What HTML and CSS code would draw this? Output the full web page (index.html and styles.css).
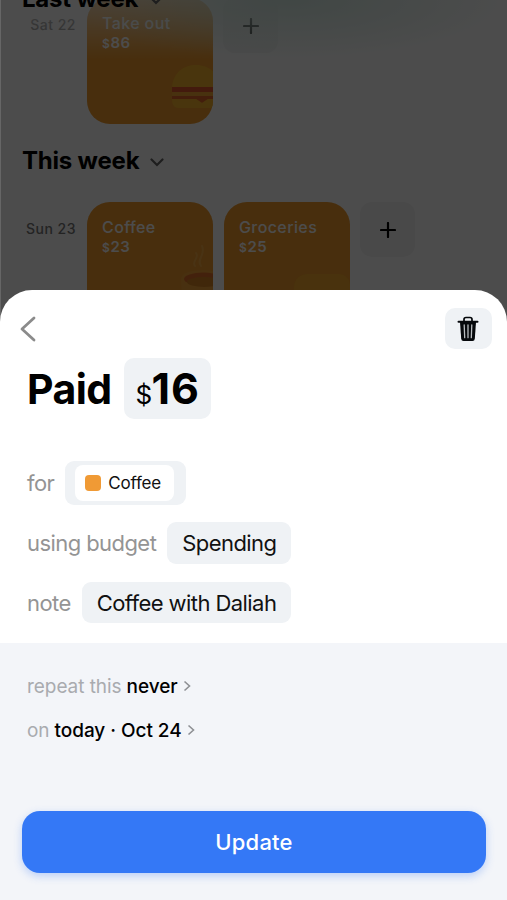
FILE: index.html
```html
<!DOCTYPE html>
<html lang="en">
<head>
    <meta charset="UTF-8">
    <meta name="viewport" content="width=device-width, initial-scale=1.0">
    <title>Edit expense</title>
    <link rel="stylesheet" href="styles.css">
</head>
<body>

<div class="page">
    <div class="week">
        <h2>Last week
            <svg class="down" viewBox="0 0 14 9"><path d="M1.5 1.5l5.5 5.5 5.5-5.5"/></svg>
        </h2>
        <div class="day">
            <div class="date faded">Sat 22</div>
            <div class="card">
                <div class="name">Take out</div>
                <div class="price"><small>$</small>86</div>
                <svg class="picture burger" viewBox="0 0 48 44">
                    <path d="M0 22C1 8 11 0 24 0s23 8 24 22z" fill="#f4b22c"/>
                    <path d="M0 22h48v5H0z" fill="#e2582e"/>
                    <path d="M0 27h48v4H0z" fill="#f1a334"/>
                    <path d="M0 31h48v3H36l-6 4-6-4H0z" fill="#e2642a"/>
                    <path d="M0 34h24l6 4 6-4h12c0 6-2 9-7 9H7c-5 0-7-3-7-9z" fill="#f4b22c"/>
                </svg>
            </div>
            <div class="add"><svg viewBox="0 0 16 16"><path d="M8 1v14M1 8h14"/></svg></div>
        </div>
    </div>

    <div class="week">
        <h2>This week
            <svg class="down" viewBox="0 0 14 9"><path d="M1.5 1.5l5.5 5.5 5.5-5.5"/></svg>
        </h2>
        <div class="day">
            <div class="date">Sun 23</div>
            <div class="card">
                <div class="name">Coffee</div>
                <div class="price"><small>$</small>23</div>
                <svg class="picture cup" viewBox="0 0 34 86">
                    <path d="M16 24c-4-5 5-8 1-13M22 24c-5-7 5-11 1-20" fill="none" stroke="#f4ab45" stroke-width="2" stroke-linecap="round"/>
                    <path d="M2 37c0-6 10-9 22-9 6 0 10 1 10 1v47H24C10 76 2 60 2 37z" fill="#f2a136"/>
                    <ellipse cx="24" cy="37" rx="19" ry="6.500" fill="#e2702a"/>
                    <ellipse cx="25" cy="40" rx="17" ry="5" fill="#d68424"/>
                </svg>
            </div>
            <div class="card">
                <div class="name">Groceries</div>
                <div class="price"><small>$</small>25</div>
                <svg class="picture bread" viewBox="0 0 56 52">
                    <path d="M0 14C0 5 6 0 14 0h30c8 0 12 5 12 12v40H0z" fill="#f3a92c"/>
                </svg>
            </div>
            <div class="add"><svg viewBox="0 0 16 16"><path d="M8 1v14M1 8h14"/></svg></div>
        </div>
    </div>
    <div class="glow"></div>
</div>

<div class="overlay"></div>

<div class="sheet">
    <div class="top">
        <svg class="back" viewBox="0 0 16 26"><path d="M14 2L2 13l12 11"/></svg>
        <div class="trash">
            <svg viewBox="0 0 22 26">
                <path d="M7 5V3.500Q7 1.500 9 1.500h4q2 0 2 2V5" fill="none" stroke="#05080b" stroke-width="1.700"/>
                <path d="M1.500 5.800h19" stroke="#05080b" stroke-width="2" stroke-linecap="round"/>
                <path d="M3 6h16l-1.200 16.800q-.2 2.200-2.300 2.200h-9q-2.100 0-2.300-2.200z" fill="#05080b"/>
                <path d="M7.200 9l.5 12.700M11 9v12.700M14.800 9l-.5 12.700" stroke="#b9bdc0" stroke-width="1.300" stroke-linecap="round"/>
            </svg>
        </div>
    </div>

    <h1>Paid <span class="amount"><small>$</small>16</span></h1>

    <div class="row row-for">
        <label>for</label>
        <div class="field category"><span class="tag"><i></i>Coffee</span></div>
    </div>
    <div class="row row-budget">
        <label>using budget</label>
        <div class="field">Spending</div>
    </div>
    <div class="row row-note">
        <label>note</label>
        <div class="field">Coffee with Daliah</div>
    </div>

    <div class="bottom">
        <div class="option">
            <span>repeat this</span> <b>never</b>
            <svg class="next" viewBox="0 0 8 12"><path d="M1.500 1.500L6.500 6l-5 4.500"/></svg>
        </div>
        <div class="option">
            <span>on</span> <b>today · Oct 24</b>
            <svg class="next" viewBox="0 0 8 12"><path d="M1.500 1.500L6.500 6l-5 4.500"/></svg>
        </div>
        <button class="update">Update</button>
    </div>
</div>

</body>
</html>
```
FILE: styles.css
```css
* {
    box-sizing: border-box;
}

body {
    margin: 0;
    height: 900px;
    position: relative;
    overflow: hidden;
    background-color: #fff;
    font-family: Inter, "Liberation Sans", sans-serif;
    color: #000;
}

svg {
    display: block;
    flex: none;
}

.page {
    height: 340px;
    overflow: hidden;
    position: relative;
    z-index: 0;
    padding-left: 2px;
}

.week {
    height: 162px;
    padding-left: 21px;
}

.week:first-child {
    margin-top: -16px;
}

h2 {
    position: relative;
    z-index: 2;
    display: flex;
    align-items: center;
    gap: 11px;
    margin: 0 0 0 -1px;
    height: 29px;
    font-size: 24px;
    line-height: 29px;
    letter-spacing: -0.2px;
}

.down {
    width: 14px;
    height: 9px;
    margin-top: 3px;
    fill: none;
    stroke: #666;
    stroke-width: 2.2;
    stroke-linecap: round;
}

.day {
    display: flex;
    padding-top: 27px;
}

.week:first-child .day {
    padding-top: 0;
    margin-top: -15px;
}

.date {
    width: 53px;
    margin: 18px 11px 0 0;
    font-size: 14px;
    line-height: 18px;
    font-weight: 500;
    letter-spacing: 0.5px;
    text-align: right;
    white-space: nowrap;
    color: #777;
}

.date.faded {
    color: #888;
}

.card {
    position: relative;
    width: 126px;
    height: 126px;
    margin-right: 11px;
    padding: 15px;
    border-radius: 23px;
    overflow: hidden;
    background-color: #f09a2c;
    color: #fff;
}

.name {
    font-size: 16px;
    line-height: 20px;
    font-weight: 500;
    letter-spacing: 0.4px;
}

.price {
    font-size: 15px;
    line-height: 19px;
    font-weight: 600;
    letter-spacing: 0.6px;
}

.price small {
    font-size: 12px;
}

.picture {
    position: absolute;
    right: 0;
}

.burger {
    width: 48px;
    height: 44px;
    right: -7px;
    bottom: 15px;
}

.cup {
    width: 34px;
    height: 86px;
    top: 40px;
}

.bread {
    width: 56px;
    height: 52px;
    bottom: 2px;
}

.add {
    display: flex;
    align-items: center;
    justify-content: center;
    width: 55px;
    height: 55px;
    margin-left: -1px;
    border-radius: 12px;
    background-color: #f5f5f5;
}

.add svg {
    width: 16px;
    height: 16px;
    stroke: #000;
    stroke-width: 2.2;
    stroke-linecap: round;
}

.glow {
    position: absolute;
    top: 0;
    left: 0;
    width: 100%;
    height: 60px;
    background:
        radial-gradient(ellipse 220px 60px at 290px 0, rgba(190, 225, 213, 0.6), rgba(190, 225, 213, 0)),
        linear-gradient(rgba(255, 255, 255, 0.65), rgba(255, 255, 255, 0));
}

.overlay {
    position: absolute;
    top: 0;
    left: 0;
    width: 100%;
    height: 100%;
    border-left: 1px solid rgba(255, 255, 255, 0.15);
    background-color: rgba(0, 0, 0, 0.7);
}

.sheet {
    position: absolute;
    top: 290px;
    left: 0;
    width: 100%;
    height: 610px;
    display: flex;
    flex-direction: column;
    border-radius: 32px 32px 0 0;
    overflow: hidden;
    background-color: #fff;
}

.top {
    display: flex;
    justify-content: space-between;
    align-items: center;
    height: 41px;
    margin: 18px 15px 0 20px;
}

.back {
    width: 16px;
    height: 26px;
    fill: none;
    stroke: #8b8b8b;
    stroke-width: 2.8;
    stroke-linecap: round;
    stroke-linejoin: round;
}

.trash {
    display: flex;
    align-items: center;
    justify-content: center;
    width: 47px;
    height: 41px;
    padding-right: 2px;
    border-radius: 10px;
    background-color: #eff2f5;
}

.trash svg {
    width: 22px;
    height: 26px;
}

h1 {
    display: flex;
    align-items: center;
    gap: 13px;
    height: 61px;
    margin: 9px 0 0 27px;
    font-size: 41px;
    line-height: 63px;
    letter-spacing: -0.6px;
    padding-top: 2px;
}

.amount {
    height: 61px;
    margin-top: -2px;
    padding: 0 11px;
    border-radius: 10px;
    background-color: #eff2f5;
    font-size: 43px;
    line-height: 61px;
    letter-spacing: 0.8px;
}

.amount small {
    font-size: 26px;
    font-weight: 400;
    letter-spacing: -0.5px;
}

.row {
    display: flex;
    align-items: center;
    gap: 11px;
    margin-left: 27px;
    font-size: 22px;
    letter-spacing: -0.57px;
}

.row label {
    color: #949494;
}

.row-for {
    height: 44px;
    margin-top: 42px;
}

.row-budget {
    height: 42px;
    margin-top: 17px;
}

.row-note {
    height: 41px;
    margin-top: 18px;
}

.field {
    display: flex;
    align-items: center;
    height: 100%;
    padding: 0 15px;
    border-radius: 9px;
    background-color: #eff2f5;
    color: #111;
}

.category {
    padding: 0 12px 0 10px;
}

.tag {
    display: flex;
    align-items: center;
    gap: 7px;
    height: 36px;
    padding: 0 13px 0 10px;
    border-radius: 8px;
    background-color: #fff;
    font-size: 17px;
    letter-spacing: -0.2px;
}

.tag i {
    width: 16px;
    height: 16px;
    border-radius: 4px;
    background-color: #f09a35;
}

.bottom {
    display: flex;
    flex-direction: column;
    flex: 1;
    margin-top: 20px;
    padding: 31px 21px 27px 22px;
    background-color: #f3f5f9;
}

.option {
    display: flex;
    align-items: center;
    gap: 5px;
    height: 24px;
    margin: 0 0 20px 5px;
    font-size: 19px;
    letter-spacing: -0.05px;
}

.option span {
    color: #a9abaf;
}

.option b {
    font-weight: 500;
}

.next {
    width: 8px;
    height: 12px;
    fill: none;
    stroke: #8e9094;
    stroke-width: 1.6;
}

.update {
    height: 62px;
    margin-top: auto;
    border: none;
    border-radius: 18px;
    background-color: #3478f6;
    box-shadow: 0 3px 8px rgba(52, 120, 246, 0.3);
    color: #fff;
    font-family: inherit;
    font-size: 22px;
    font-weight: 500;
    letter-spacing: 0.2px;
}
```
